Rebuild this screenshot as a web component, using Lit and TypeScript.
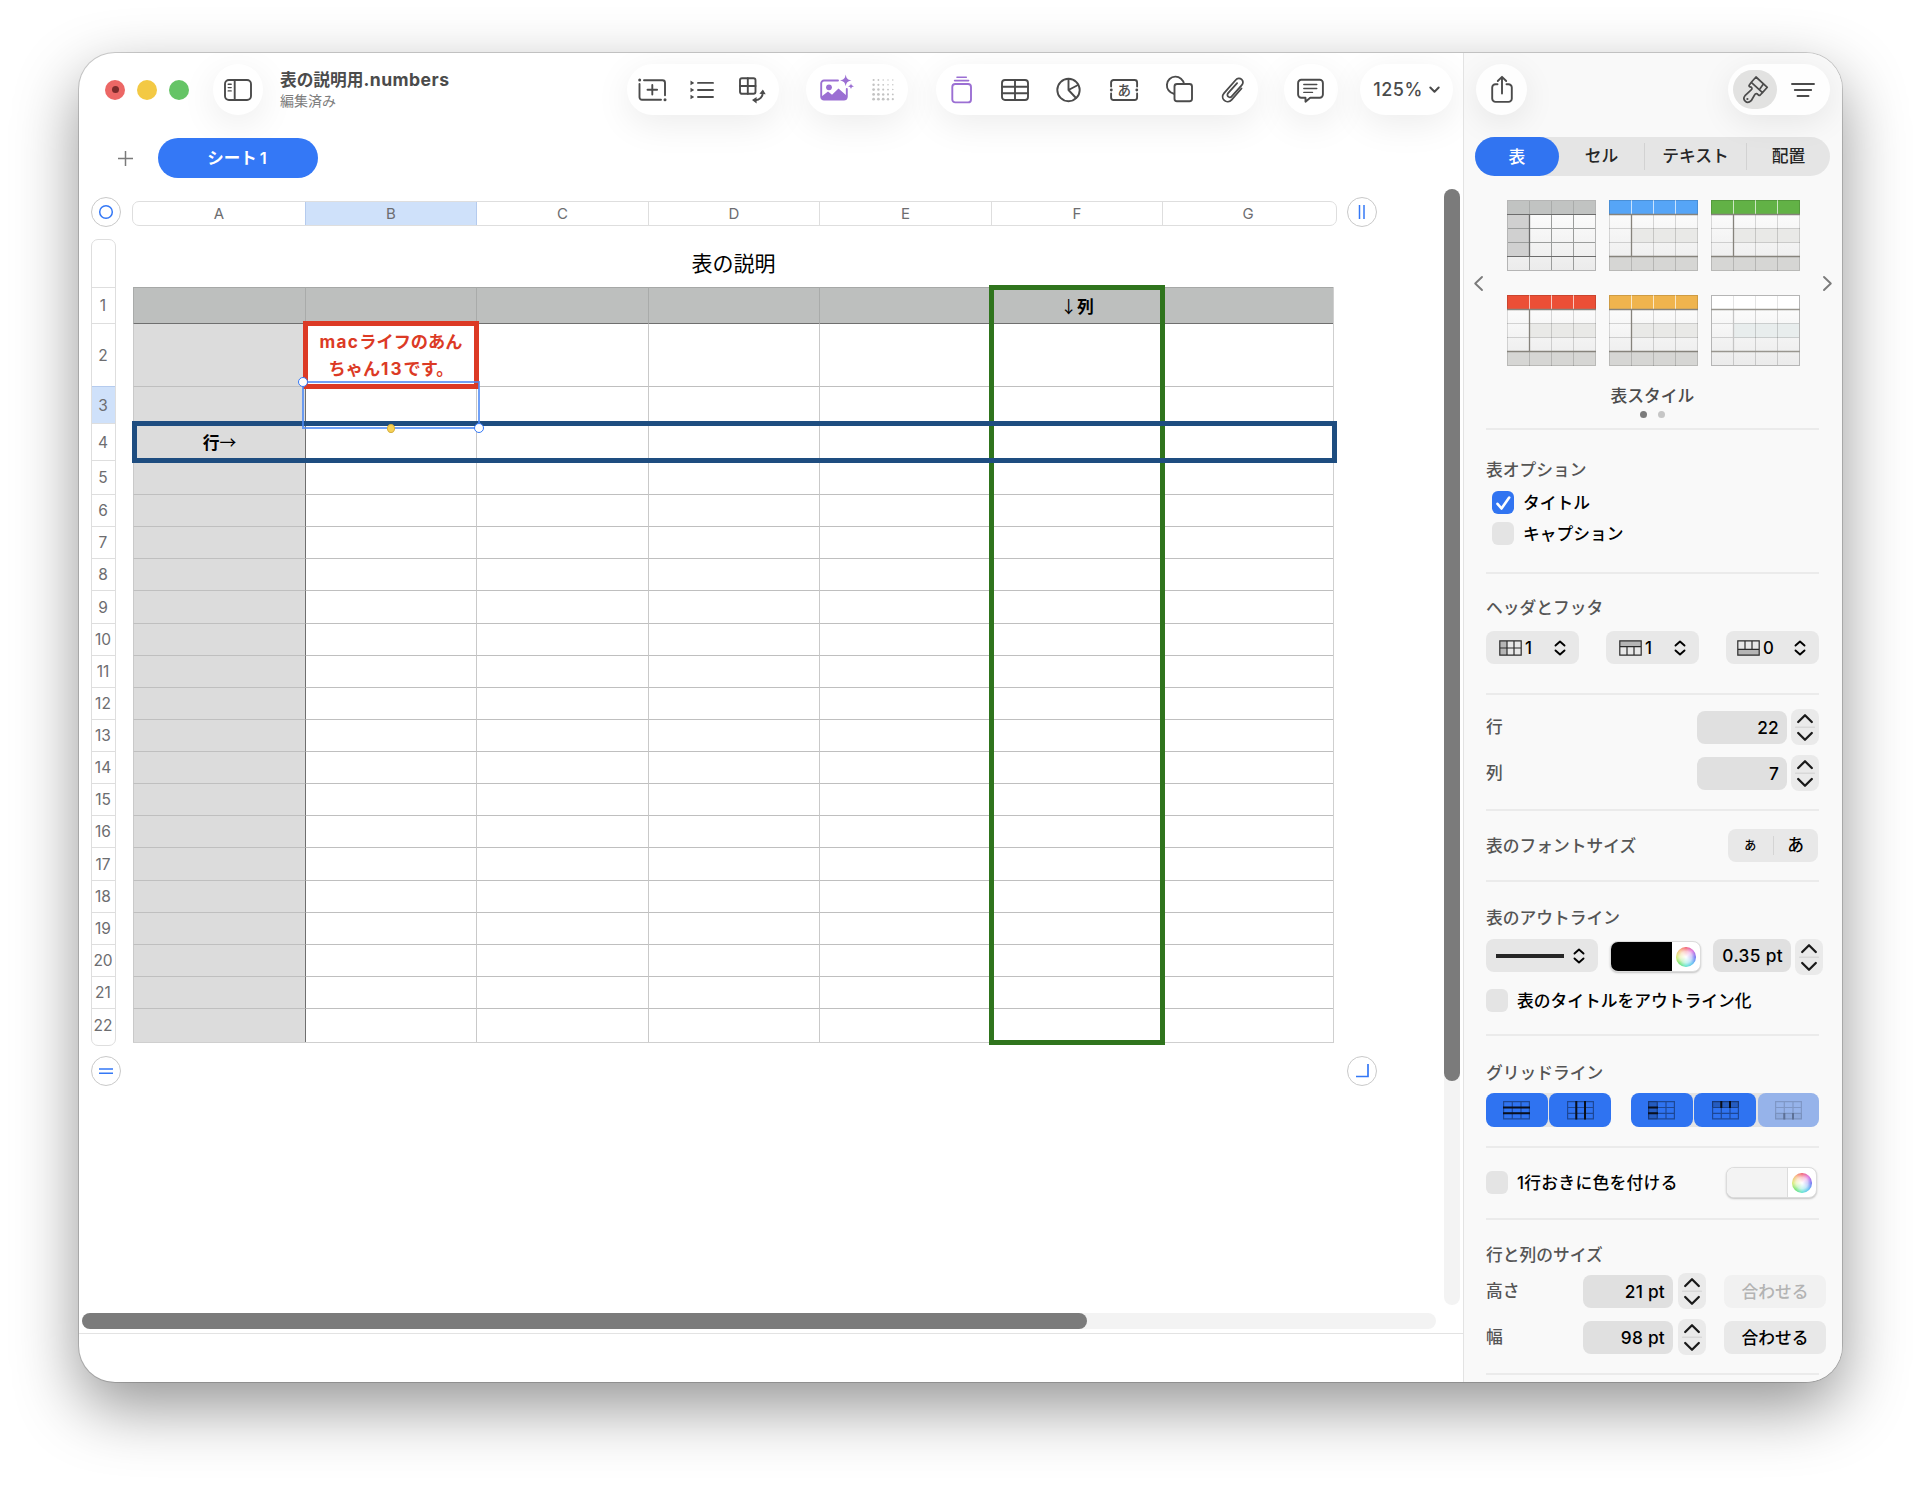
import { LitElement, html, svg, css, TemplateResult, SVGTemplateResult } from "lit";
import { customElement, property } from "lit/decorators.js";
import { classMap } from "lit/directives/class-map.js";
import { styleMap } from "lit/directives/style-map.js";

const COLUMNS = [
  { name: "A", width: 172 },
  { name: "B", width: 171 },
  { name: "C", width: 172 },
  { name: "D", width: 171 },
  { name: "E", width: 172 },
  { name: "F", width: 171 },
  { name: "G", width: 171 },
];

const ROW_HEIGHTS = [
  36, 63, 37, 37, 34, 32, 32, 32, 33, 32, 32, 32, 32, 32, 32, 32, 33, 32, 32, 32, 32, 34,
];

const CELL_TEXT: Record<string, TemplateResult> = {
  F1: html`<span class="arrow">↓</span><span>列</span>`,
  B2: html`<span class="note"><span class="latin">mac</span>ライフのあん<br />ちゃん<span class="digits">13</span>です。</span>`,
  A4: html`<span>行</span><span class="arrow">→</span>`,
};

/* ---------- toolbar glyphs: every drawing is 30 units tall ---------- */

const glyph = (width: number, body: SVGTemplateResult) => html`<svg
  class="glyph"
  width=${width}
  height="30"
  viewBox="0 0 ${width} 30"
  fill="none"
  stroke="currentColor"
  stroke-width="1.9"
  stroke-linecap="round"
  stroke-linejoin="round"
>
  ${body}
</svg>`;

const sidebarGlyph = glyph(
  28,
  svg`<rect x="1" y="5" width="26" height="20" rx="4"/><path d="M10.7 5v20"/><path stroke-width="1.4" d="M4.2 9.3h3M4.2 12.6h3M4.2 15.9h3"/>`
);
const insertGlyph = glyph(
  29,
  svg`<path d="M6 5.2h18.5a2.5 2.5 0 0 1 2.5 2.5v12.5M23 24.8H4a2.5 2.5 0 0 1-2.500-2.500V9"/><circle cx="1.700" cy="5" r="1.500" fill="currentColor" stroke="none"/><circle cx="27" cy="24.800" r="1.500" fill="currentColor" stroke="none"/><path d="M14.300 10v9.600M9.500 14.800h9.600"/>`
);
const listGlyph = glyph(
  26,
  svg`<path d="M8 7.900h15M8 15h15M8 22h15"/><g fill="currentColor" stroke="none"><path d="M.5 5.600v4.600l3.800-2.300zM.5 12.700v4.600l3.800-2.300zM.5 19.700v4.600l3.800-2.300z"/></g>`
);
const pivotGlyph = glyph(
  27,
  svg`<rect x="1" y="3.300" width="15.500" height="15.500" rx="2"/><path d="M8.800 3.300v15.500M1 11h15.500M23.700 17.500c.3 4-3 7.700-7.500 7.700"/><g fill="currentColor" stroke="none"><path d="M20.400 18.800l3.500-4.300 2.800 4.800zM17.600 22l-4.600 3 4.600 3.400z"/></g>`
);
const imageGlyph = glyph(
  35,
  svg`<path d="M18 5.500H4a2.800 2.800 0 0 0-2.800 2.800v13.500A2.800 2.800 0 0 0 4 24.600h20a2.800 2.800 0 0 0 2.800-2.800V14"/><circle cx="9" cy="12.300" r="2.900" fill="currentColor" stroke="none"/><path fill="currentColor" stroke="none" d="M1.500 21.500l6.500-5 4 3.200 6.500-6.200 8.500 7.500v1.500a2.500 2.500 0 0 1-2.500 2.500H4a2.500 2.500 0 0 1-2.500-2.500z"/><path fill="currentColor" stroke="none" d="M25.700-.5c.7 4 1.700 5 5.700 5.900-4 .9-5 1.900-5.700 5.900-.7-4-1.700-5-5.700-5.900 4-.9 5-1.900 5.700-5.900zM31 8.300c.4 2 .9 2.500 3 3-2.100.5-2.600 1-3 3-.4-2-.9-2.500-3-3 2.100-.5 2.600-1 3-3z"/>`
);
const dotsGlyph = glyph(
  23,
  svg`<g fill="#c3c3c3" stroke="none">${[0, 1, 2, 3, 4].map((r) =>
    [0, 1, 2, 3, 4].map(
      (c) =>
        svg`<circle cx=${1.6 + c * 4.8} cy=${5 + r * 4.8} r=${Math.min(1.4, Math.max(0.7, 1.4 - c * 0.16 + (r - 2) * 0.16))}/>`
    )
  )}</g>`
);
const stackGlyph = glyph(
  22,
  svg`<rect x="1.300" y="9" width="18.700" height="18.400" rx="3"/><path d="M3.600 5.600h14M6 2.200h9.300" stroke-width="1.600"/>`
);
const tableGlyph = glyph(
  28,
  svg`<rect x="1" y="5" width="26" height="20" rx="3"/><path d="M14 5v20M1 11.700h26M1 18.300h26"/>`
);
const pieGlyph = glyph(
  25,
  svg`<circle cx="12.500" cy="15" r="11.200"/><path d="M12.500 4v11l9.500-5M12.500 15l7.500 8"/>`
);
const textGlyph = glyph(
  29,
  svg`<g transform="translate(.8 0)"><path d="M1.300 11.500V7.500A2.500 2.500 0 0 1 3.800 5h21a2.500 2.500 0 0 1 2.500 2.500v4M1.300 18.500v4A2.500 2.500 0 0 0 3.800 25h21a2.500 2.500 0 0 0 2.500-2.500v-4"/><circle cx="1.500" cy="15" r="1.400" fill="currentColor" stroke="none"/><circle cx="27" cy="15" r="1.400" fill="currentColor" stroke="none"/><text x="14.400" y="20" text-anchor="middle" font-size="13.500" font-weight="500" fill="currentColor" stroke="none">あ</text></g>`
);
const shapesGlyph = glyph(
  28,
  svg`<g transform="translate(.8 0)"><path d="M8 18.700A8.600 8.600 0 1 1 18.200 9"/><rect x="8.700" y="9" width="17.500" height="17.300" rx="2.500"/></g>`
);
const clipGlyph = glyph(
  24,
  svg`<path stroke-width="1.800" d="M20.500 13.500L10.600 24.800c-2 2.200-5.200 2.500-7.300.6s-2.200-5-.2-7.300L14.700 5c1.700-1.900 4.200-2.100 5.900-.6s1.800 3.900.2 5.700L10.700 21.300c-1 1.200-2.500 1.300-3.500.4s-1.100-2.400-.1-3.500l9-10"/>`
);
const commentGlyph = glyph(
  27,
  svg`<path d="M4.300 4.800h18.400a3.200 3.200 0 0 1 3.200 3.200v11.500a3.200 3.200 0 0 1-3.200 3.200h-9.500l-4.700 4v-4H4.300a3.200 3.200 0 0 1-3.200-3.200V8a3.200 3.200 0 0 1 3.200-3.200z"/><path stroke-width="1.400" d="M6.800 9.500h13M6.800 13.500h13M6.800 17.400h8.700"/>`
);
const shareGlyph = glyph(
  22,
  svg`<path d="M6.500 9.300H4.500A3.300 3.300 0 0 0 1.200 12.600v11a3.300 3.300 0 0 0 3.300 3.300h13a3.300 3.300 0 0 0 3.300-3.300v-11a3.300 3.300 0 0 0-3.300-3.300h-2"/><path d="M11 18.500V2.300M6.800 6L11 1.800 15.200 6"/>`
);
const brushGlyph = glyph(
  27,
  svg`<path stroke-width="1.700" d="M14 2L25.300 12.300 20.500 17.600 9.300 7.300zM9.300 7.300L7.200 10.200c-.6.800.2 1.600 1 1.700 1.800.3 2.500 1.700 1 3L3 20.700c-3 3.500 1.500 9.500 6.200 5l3.500-6c.8-1.500 2.300-1.500 3.200-.2.600.9 1.500 1.200 2.300.5l2.300-2.400M21 9.500l-2.800 4"/><circle cx="5.400" cy="24" r="1.100" fill="currentColor" stroke="none"/>`
);
const linesGlyph = glyph(24, svg`<path d="M1 9h22M3.800 15h16.400M6.500 21h11"/>`);

const chevron = html`<svg width="11" height="8" viewBox="0 0 11 8" fill="none" stroke="currentColor" stroke-width="2" stroke-linecap="round" stroke-linejoin="round"><path d="M1.300 1.500L5.500 5.800 9.700 1.500" /></svg>`;
const upDown = html`<svg class="updown" width="12" height="16" viewBox="0 0 12 16" fill="none" stroke="currentColor" stroke-width="1.900" stroke-linecap="round" stroke-linejoin="round"><path d="M1.500 5.500L6 1.500l4.500 4M1.500 10.500L6 14.500l4.500-4" /></svg>`;
const stepper = html`<span class="stepper"
  ><svg width="28" height="36" viewBox="0 0 28 36" fill="none" stroke="#1a1a1a" stroke-width="2.300" stroke-linecap="round" stroke-linejoin="round"><path d="M7.200 13L14 6.300 20.800 13M7.200 24L14 30.700 20.800 24" /><path d="M4.500 18.200h19" stroke="#cfcfcf" stroke-width="1" /></svg
></span>`;
const wheel = html`<span class="wheel"></span>`;

/* Header / footer pickers: which strip of the small table is shaded. */
const bandIcon = (kind: "column" | "header" | "footer") => html`<svg width="23" height="16" viewBox="0 0 23 16" fill="none" stroke="#2b2b2b" stroke-width="1.200">
  ${kind === "column"
    ? svg`<path fill="#b5b5b5" stroke="none" d="M1 1h7v14H1z"/><path d="M.8.8h21.400v14.400H.8zM8 1v14M15 1v14M1 8h21"/>`
    : kind === "header"
      ? svg`<path fill="#b5b5b5" stroke="none" d="M1 1h21v5.500H1z"/><path d="M.8.8h21.400v14.400H.8zM1 6.600h21M8 6.600V15M15 6.600V15"/>`
      : svg`<path fill="#b5b5b5" stroke="none" d="M1 9.500h21V15H1z"/><path d="M.8.8h21.400v14.400H.8zM1 9.400h21M8 1v8.400M15 1v8.400"/>`}
</svg>`;

const GRID_STRESS: Record<string, SVGTemplateResult> = {
  rows: svg`<path d="M0 6.500h27M0 12.300h27"/>`,
  columns: svg`<path d="M9.300 0v18.500M18 0v18.500"/>`,
  headColumn: svg`<path fill="#0003" stroke="none" d="M0 0h9.500v18.500H0z"/><path d="M0 6.500h10M0 12.300h10"/>`,
  headRow: svg`<path fill="#0003" stroke="none" d="M0 0h27v6.500H0z"/><path d="M9.300 0v7M18 0v7"/>`,
  footRow: svg`<path fill="#0002" stroke="none" d="M0 12.300h27v6.200H0z"/><path d="M9.300 12v6.500M18 12v6.500"/>`,
};
const gridIcon = (kind: string) => html`<svg width="27" height="19" viewBox="0 0 27 19" fill="none">
  <path stroke="#00000060" stroke-width="1.200" d="M.6.6h25.800v17.300H.6zM1 6.500h25M1 12.300h25M9.300 1v17M18 1v17" />
  <g stroke="#0a0f1c" stroke-width="2">${GRID_STRESS[kind]}</g>
</svg>`;

const STYLES = [
  { id: "plain", head: "#c1c3c2" },
  { id: "blue", head: "#56a5f7" },
  { id: "green", head: "#62b246" },
  { id: "red", head: "#eb4f36" },
  { id: "amber", head: "#efb44e" },
  { id: "blank", head: "#ffffff" },
];

/* Miniature table used in the style gallery. */
@customElement("style-thumb")
class StyleThumb extends LitElement {
  @property() kind = "plain";
  @property() head = "#fff";

  static styles = css`
    :host {
      display: block;
      width: 89px;
      height: 71px;
    }
    svg {
      display: block;
    }
  `;

  render() {
    const plain = this.kind === "plain";
    const blank = this.kind === "blank";
    const line = plain ? "#9b9d9c" : "#00000026";
    const strong = plain ? "#6c6c6c" : blank ? "#99968f" : "#86837c";
    const split = plain ? "#a9abaa" : blank ? "#e4e4e4" : "#ffffffb0";
    return html`<svg width="89" height="71" viewBox="0 0 89 71">
      <defs>
        <linearGradient id="fade" x1="0" y1="0" x2="0" y2="1">
          <stop offset="0" stop-color="#fff" />
          <stop offset="1" stop-color="#ebebeb" />
        </linearGradient>
      </defs>
      <rect width="89" height="71" fill="url(#fade)" />
      <rect width="89" height="14.500" fill=${this.head} />
      ${plain
        ? svg`<rect y="14.500" width="22.500" height="42" fill="#d0d0d0"/>`
        : svg`<rect x="22.500" y="28.500" width="67" height="14" fill=${blank ? "#e8eded" : "#e9e9e7"}/>`}
      ${plain || blank ? "" : svg`<rect y="56.500" width="89" height="14.500" fill="#d6d6d4"/>`}
      <path stroke=${split} d="M22.500 0v14M44.500 0v14M66.500 0v14" />
      <path stroke=${line} fill="none" d="M0 28.500h89M0 42.500h89M44.500 15v56M66.500 15v56M22.500 57v14" />
      <rect x=".5" y=".5" width="88" height="70" fill="none" stroke=${blank || plain ? "#b5b5b5" : "#00000022"} />
      <path stroke=${blank ? "#c5c5c5" : strong} stroke-width="1.300" d="M22.500 14.500v42" />
      <path stroke=${strong} stroke-width=${plain ? 1.1 : 1.6} d="M0 14.500h89M0 56.500h89" />
    </svg>`;
  }
}

/* Spreadsheet canvas: headers, cells and the coloured frames over them. */
@customElement("sheet-canvas")
class SheetCanvas extends LitElement {
  static styles = css`
    :host {
      display: block;
      padding: 19px 0 0 12px;
      font-size: 15px;
      color: #6d6d70;
    }
    .line {
      display: flex;
      align-items: center;
    }
    .knob {
      width: 28px;
      height: 28px;
      border: 1px solid #c9c9c9;
      border-radius: 50%;
      display: flex;
      align-items: center;
      justify-content: center;
      background: #fff;
    }
    .knob svg {
      display: block;
    }
    .cols {
      display: flex;
      width: 1203px;
      height: 23px;
      margin: 2px 10px 0 11px;
      border: 1px solid #dedede;
      border-radius: 7px;
      overflow: hidden;
    }
    .col {
      box-sizing: border-box;
      display: flex;
      align-items: center;
      justify-content: center;
      border-left: 1px solid #dedede;
    }
    .col:first-child {
      border-left: 0;
    }
    .col.on {
      background: #cfe1fa;
      border-color: #b5cbee;
    }
    .col.after {
      border-color: #b5cbee;
    }
    .grid-area {
      display: flex;
      align-items: flex-start;
      margin-top: 12px;
      gap: 17px;
    }
    .rows {
      width: 23px;
      height: 805px;
      border: 1px solid #dedede;
      border-radius: 7px;
      overflow: hidden;
    }
    .row {
      box-sizing: border-box;
      display: flex;
      align-items: center;
      justify-content: center;
      border-top: 1px solid #dedede;
      padding-right: 1px;
      font-size: 15.5px;
    }
    .row.pad {
      height: 47px;
      border-top: 0;
    }
    .row.on {
      background: #cfe1fa;
      border-color: #b5cbee;
    }
    .table-box {
      width: 1201px;
    }
    .caption {
      height: 48px;
      line-height: 50px;
      text-align: center;
      font-size: 21px;
      color: #000;
      font-weight: 400;
    }
    .table {
      position: relative;
      display: grid;
      border-right: 1px solid #cfcfcf;
      border-bottom: 1px solid #cfcfcf;
    }
    .cell {
      box-sizing: border-box;
      display: flex;
      align-items: center;
      justify-content: center;
      border-top: 1px solid #bfbfbf;
      border-left: 1px solid #c9c9c9;
      color: #000;
      font-size: 16.800px;
      font-weight: 700;
    }
    .cell.side {
      background: #dcdcdc;
    }
    .cell.first {
      border-left-color: #6f6f6f;
    }
    .cell.head {
      background: #bdbfbe;
      border-top-color: #a6a8a7;
      border-left-color: #a9abaa;
    }
    .cell.under {
      border-top-color: #6f6f6f;
    }
    .arrow {
      font-family: "Noto Sans CJK JP", sans-serif;
      font-weight: 400;
      line-height: 24px;
    }
    .note {
      color: #dc3a25;
      text-align: center;
      line-height: 26.400px;
      font-size: 17.200px;
      padding-top: 1px;
    }
    .latin {
      letter-spacing: 1.300px;
    }
    .digits {
      letter-spacing: 2px;
      margin-left: 1px;
    }
    .frame {
      position: absolute;
      box-sizing: border-box;
      pointer-events: none;
    }
    .frame.green {
      left: 856px;
      top: -2px;
      width: 176px;
      height: 760px;
      border: 5px solid #2f741d;
    }
    .frame.red {
      left: 170px;
      top: 34px;
      width: 176px;
      height: 68px;
      border: 5px solid #dc3a25;
    }
    .frame.blue {
      left: -1px;
      top: 134px;
      width: 1205px;
      height: 42px;
      border: 5px solid #1e4d80;
    }
    .frame.pick {
      left: 169px;
      top: 94px;
      width: 178px;
      height: 48px;
      border: 2px solid #4d8af5cc;
    }
    .dot {
      position: absolute;
      box-sizing: border-box;
      width: 10px;
      height: 10px;
      border-radius: 50%;
      background: #fff;
      border: 1.500px solid #3478f6;
    }
    .dot.tl {
      left: -6px;
      top: -6px;
    }
    .dot.br {
      right: -6px;
      bottom: -6px;
    }
    .dot.mid {
      width: 8px;
      height: 9px;
      left: 83px;
      bottom: -6px;
      background: #f7d154;
      border: 1px solid #d3ad3c;
    }
    .line.foot {
      margin-top: 10px;
      gap: 1226px;
    }
  `;

  render() {
    const template = {
      gridTemplateColumns: COLUMNS.map((c) => `${c.width}px`).join(" "),
      gridTemplateRows: ROW_HEIGHTS.map((h) => `${h}px`).join(" "),
    };
    return html`
      <div class="line">
        <div class="knob">
          <svg width="16" height="16"><circle cx="8" cy="8" r="6.300" fill="none" stroke="#3478f6" stroke-width="1.500" /></svg>
        </div>
        <div class="cols">
          ${COLUMNS.map(
            (c, i) => html`<div
              class=${classMap({ col: true, on: i === 1, after: i === 2 })}
              style=${styleMap({ width: `${c.width}px` })}
            >
              ${c.name}
            </div>`
          )}
        </div>
        <div class="knob">
          <svg width="16" height="16"><path d="M5.500 1v14M10 1v14" stroke="#3478f6" stroke-width="1.500" /></svg>
        </div>
      </div>
      <div class="grid-area">
        <div class="rows">
          <div class="row pad"></div>
          ${ROW_HEIGHTS.map(
            (h, i) => html`<div
              class=${classMap({ row: true, on: i === 2 })}
              style=${styleMap({ height: `${h}px` })}
            >
              ${i + 1}
            </div>`
          )}
        </div>
        <div class="table-box">
          <div class="caption">表の説明</div>
          <div class="table" style=${styleMap(template)}>
            ${ROW_HEIGHTS.map((_, r) =>
              COLUMNS.map(
                (c, i) => html`<div
                  class=${classMap({
                    cell: true,
                    head: r === 0,
                    side: i === 0 && r > 0,
                    first: i === 1 && r > 0,
                    under: r === 1,
                  })}
                >
                  ${CELL_TEXT[`${c.name}${r + 1}`] ?? ""}
                </div>`
              )
            )}
            <div class="frame green"></div>
            <div class="frame red"></div>
            <div class="frame blue"></div>
            <div class="frame pick">
              <i class="dot tl"></i><i class="dot mid"></i><i class="dot br"></i>
            </div>
          </div>
        </div>
      </div>
      <div class="line foot">
        <div class="knob">
          <svg width="16" height="16"><path d="M1 6h14M1 10.300h14" stroke="#3478f6" stroke-width="1.600" /></svg>
        </div>
        <div class="knob">
          <svg width="16" height="16"><path d="M2 13.500h12V1" fill="none" stroke="#3478f6" stroke-width="1.700" /></svg>
        </div>
      </div>
    `;
  }
}

/* Format inspector on the right. */
@customElement("format-panel")
class FormatPanel extends LitElement {
  static styles = css`
    :host {
      box-sizing: border-box;
      display: block;
      width: 379px;
      background: #f9f9f9;
      border-left: 1px solid #e3e3e3;
      font-size: 16.750px;
      font-weight: 500;
      color: #000;
      overflow: hidden;
    }
    svg {
      display: block;
      flex: none;
      overflow: visible;
    }
    .bar {
      display: flex;
      align-items: center;
      justify-content: space-between;
      height: 73px;
      padding: 0 12px 0 12px;
      color: #4b4b4b;
    }
    .pill {
      display: flex;
      align-items: center;
      justify-content: center;
      height: 51px;
      border-radius: 26px;
      background: #fefefe;
      box-shadow: 0 8px 32px rgba(0, 0, 0, 0.08);
    }
    .pill.round {
      width: 51px;
    }
    .pill.duo {
      box-sizing: border-box;
      width: 102px;
      justify-content: space-between;
      padding: 0 15px 0 5px;
    }
    .active {
      display: flex;
      align-items: center;
      justify-content: center;
      width: 44px;
      height: 39px;
      border-radius: 20px;
      background: #e2e2e1;
    }
    .tabs {
      display: grid;
      grid-template-columns: 84px 86px 102px 83px;
      align-items: center;
      height: 39px;
      margin: 11px 12px 0 11px;
      border-radius: 20px;
      background: #e5e5e5;
      color: #262626;
    }
    .tab {
      text-align: center;
      line-height: 27px;
    }
    .tab.on {
      height: 39px;
      line-height: 40px;
      border-radius: 20px;
      background: #3174f1;
      color: #fff;
    }
    .tab.rule {
      border-right: 1px solid #d2d2d2;
    }
    .gallery {
      display: flex;
      align-items: center;
      justify-content: space-between;
      margin: 24px 10px 0 10px;
      color: #7b7b7b;
    }
    .thumbs {
      display: grid;
      grid-template-columns: repeat(3, 89px);
      gap: 24px 13px;
    }
    .name {
      margin-top: 18px;
      line-height: 24px;
      text-align: center;
      color: #4c4c4c;
      padding-right: 1px;
    }
    .pager {
      display: flex;
      justify-content: center;
      gap: 11px;
      margin: 3px 1px 10px 0;
    }
    .pager i {
      width: 7px;
      height: 7px;
      border-radius: 50%;
      background: #c6c6c6;
    }
    .pager i.on {
      background: #7b7b7b;
    }
    .section {
      box-sizing: border-box;
      margin: 0 23px 0 22px;
      border-top: 2px solid #ebebeb;
    }
    .title,
    .label {
      color: #555;
      line-height: 24px;
    }
    .row {
      display: flex;
      align-items: center;
    }
    .row.between {
      justify-content: space-between;
    }
    .check {
      display: flex;
      align-items: center;
      gap: 9px;
      line-height: 24px;
    }
    .box {
      display: flex;
      align-items: center;
      justify-content: center;
      width: 22px;
      height: 23px;
      border-radius: 6px;
      background: #e4e4e4;
    }
    .box.on {
      background: #3174f1;
    }
    .ctl {
      box-sizing: border-box;
      display: flex;
      align-items: center;
      height: 33px;
      border-radius: 8px;
      background: #e8e8e8;
    }
    .field {
      justify-content: flex-end;
      width: 90px;
      padding-right: 8px;
      background: #e0e0e0;
      font-size: 17.300px;
      letter-spacing: 0.250px;
    }
    .stepper {
      width: 28px;
      height: 36px;
      border-radius: 8px;
      background: #eaeaea;
    }
    .spacer {
      flex: 1;
    }
    .options {
      height: 144px;
      padding-top: 28px;
    }
    .options .check {
      margin: 8px 0 0 6px;
      height: 23px;
    }
    .options .title + .check {
      margin-top: 9px;
    }
    .headers {
      height: 121px;
      padding-top: 22px;
    }
    .headers .row {
      margin-top: 11px;
    }
    .headers .ctl {
      width: 93px;
      padding: 0 13px;
      gap: 3px;
      justify-content: flex-start;
    }
    .headers .ctl.tight {
      padding-left: 11px;
    }
    .headers .updown {
      margin-left: auto;
    }
    .counts {
      height: 116px;
      padding-top: 14px;
    }
    .counts .row {
      height: 36px;
      margin-bottom: 10px;
      gap: 4px;
    }
    .fontsize {
      height: 71px;
      padding-top: 18px;
    }
    .sizes {
      width: 90px;
      margin-right: 1px;
    }
    .sizes span {
      flex: 1;
      text-align: center;
      line-height: 19px;
    }
    .sizes .small {
      font-size: 12px;
      border-right: 1px solid #d4d4d4;
    }
    .outline {
      height: 154px;
      padding-top: 24px;
    }
    .outline .row {
      width: 339px;
      height: 36px;
      margin-top: 9px;
      align-items: flex-start;
    }
    .outline .stroke {
      width: 112px;
      padding: 0 13px 0 10px;
      justify-content: space-between;
      background: #e6e6e6;
    }
    .stroke-line {
      width: 68px;
      height: 4px;
      background: #262626;
    }
    .well {
      box-sizing: border-box;
      display: flex;
      width: 91px;
      height: 31px;
      border: 1px solid #dcdcdc;
      border-radius: 8px;
      overflow: hidden;
      background: #fff;
      box-shadow: 0 1px 2px rgba(0, 0, 0, 0.22);
    }
    .well .fill {
      flex: 1;
      background: #f3f3f3;
      border-right: 1px solid #dcdcdc;
    }
    .well.dark .fill {
      background: #000;
      border-color: #000;
      margin: -1px 0 -1px -1px;
    }
    .well .tray {
      display: flex;
      align-items: center;
      justify-content: center;
      width: 28px;
    }
    .wheel {
      width: 20px;
      height: 20px;
      border-radius: 50%;
      background: radial-gradient(circle, #fff 0, #ffffffb0 40%, #fff0 75%),
        conic-gradient(#f0465a, #d858d8, #5a5cf0, #46b4f0, #48e0c8, #5ee05a, #d4e860, #f7b26a, #f0465a);
    }
    .outline .well {
      margin: 2px 12px 0 12px;
    }
    .outline .pt {
      width: 78px;
      padding-right: 8px;
      margin-right: 4px;
      letter-spacing: 0.350px;
    }
    .outline .check {
      margin-top: 14px;
      height: 23px;
    }
    .gridlines {
      height: 112px;
      padding-top: 25px;
    }
    .gridlines .row {
      margin-top: 8px;
      gap: 20px;
    }
    .set {
      display: flex;
      gap: 1.500px;
      background: #e4e4e4;
      border-radius: 9px;
    }
    .key {
      display: flex;
      align-items: center;
      justify-content: center;
      width: 61.800px;
      height: 34px;
      border-radius: 8px;
      background: #2f73f1;
    }
    .key.dim {
      background: #96b3ea;
    }
    .key.dim svg {
      opacity: 0.4;
    }
    .banding {
      height: 72px;
      padding-top: 19px;
    }
    .banding .row {
      height: 31px;
      padding-right: 2px;
    }
    .banding .check {
      letter-spacing: 0.300px;
    }
    .dims {
      height: 155px;
      padding-top: 23px;
    }
    .dims .row {
      width: 340px;
      height: 36px;
      margin-top: 6px;
    }
    .dims .row + .row {
      margin-top: 10px;
    }
    .dims .stepper {
      margin: 0 18px 0 5px;
    }
    .dims .fit {
      width: 102px;
      justify-content: center;
    }
    .dims .fit.off {
      background: #f1f1f1;
      color: #b3b3b3;
    }
    .last {
      height: 9px;
    }
  `;

  render() {
    const arrow = (d: string) => html`<svg width="9" height="15" viewBox="0 0 9 15" fill="none" stroke="currentColor" stroke-width="1.900" stroke-linecap="round" stroke-linejoin="round"><path d=${d} /></svg>`;
    return html`
      <div class="bar">
        <div class="pill round">${shareGlyph}</div>
        <div class="pill duo"><span class="active">${brushGlyph}</span>${linesGlyph}</div>
      </div>
      <div class="tabs">
        <span class="tab on">表</span><span class="tab rule">セル</span
        ><span class="tab rule">テキスト</span><span class="tab">配置</span>
      </div>
      <div class="gallery">
        ${arrow("M8 1L1.200 7.500 8 14")}
        <div class="thumbs">
          ${STYLES.map((s) => html`<style-thumb .kind=${s.id} .head=${s.head}></style-thumb>`)}
        </div>
        ${arrow("M1 1l6.800 6.500L1 14")}
      </div>
      <div class="name">表スタイル</div>
      <div class="pager"><i class="on"></i><i></i></div>

      <div class="section options">
        <div class="title">表オプション</div>
        <div class="check">
          <span class="box on"
            ><svg width="15" height="14" viewBox="0 0 15 14" fill="none" stroke="#fff" stroke-width="2.600" stroke-linecap="round" stroke-linejoin="round"><path d="M1.500 7.800l4 4.700L13.200 1.500" /></svg></span
          >タイトル
        </div>
        <div class="check"><span class="box"></span>キャプション</div>
      </div>

      <div class="section headers">
        <div class="title">ヘッダとフッタ</div>
        <div class="row between">
          <span class="ctl">${bandIcon("column")}1${upDown}</span>
          <span class="ctl">${bandIcon("header")}1${upDown}</span>
          <span class="ctl tight">${bandIcon("footer")}0${upDown}</span>
        </div>
      </div>

      <div class="section counts">
        <div class="row">
          <span class="label">行</span><span class="spacer"></span><span class="ctl field">22</span>${stepper}
        </div>
        <div class="row">
          <span class="label">列</span><span class="spacer"></span><span class="ctl field">7</span>${stepper}
        </div>
      </div>

      <div class="section fontsize">
        <div class="row between">
          <span class="label">表のフォントサイズ</span>
          <span class="ctl sizes"><span class="small">あ</span><span>あ</span></span>
        </div>
      </div>

      <div class="section outline">
        <div class="title">表のアウトライン</div>
        <div class="row">
          <span class="ctl stroke"><i class="stroke-line"></i>${upDown}</span>
          <span class="well dark"><i class="fill"></i><span class="tray">${wheel}</span></span>
          <span class="ctl field pt">0.35 pt</span>${stepper}
        </div>
        <div class="check"><span class="box"></span>表のタイトルをアウトライン化</div>
      </div>

      <div class="section gridlines">
        <div class="title">グリッドライン</div>
        <div class="row">
          <div class="set">
            <span class="key">${gridIcon("rows")}</span><span class="key">${gridIcon("columns")}</span>
          </div>
          <div class="set">
            <span class="key">${gridIcon("headColumn")}</span><span class="key">${gridIcon("headRow")}</span
            ><span class="key dim">${gridIcon("footRow")}</span>
          </div>
        </div>
      </div>

      <div class="section banding">
        <div class="row between">
          <div class="check"><span class="box"></span>1行おきに色を付ける</div>
          <span class="well"><i class="fill"></i><span class="tray">${wheel}</span></span>
        </div>
      </div>

      <div class="section dims">
        <div class="title">行と列のサイズ</div>
        <div class="row">
          <span class="label">高さ</span><span class="spacer"></span><span class="ctl field">21 pt</span>${stepper}<span
            class="ctl fit off"
            >合わせる</span
          >
        </div>
        <div class="row">
          <span class="label">幅</span><span class="spacer"></span><span class="ctl field">98 pt</span>${stepper}<span
            class="ctl fit"
            >合わせる</span
          >
        </div>
      </div>
      <div class="section last"></div>
    `;
  }
}

@customElement("app-root")
class AppRoot extends LitElement {
  static styles = css`
    :host {
      box-sizing: border-box;
      display: block;
      height: 1485px;
      padding: 53px 78px 0 79px;
      overflow: hidden;
      background: #fff;
      font-family: Inter, "Noto Sans CJK JP", sans-serif;
    }
    .window {
      display: flex;
      height: 1329px;
      border-radius: 36px;
      overflow: hidden;
      background: #fff;
      box-shadow: 0 0 0 1px rgba(0, 0, 0, 0.17), 0 25px 64px rgba(0, 0, 0, 0.42);
    }
    .main {
      display: flex;
      flex-direction: column;
      width: 1384px;
    }
    svg {
      display: block;
      flex: none;
      overflow: visible;
    }
    .toolbar {
      display: flex;
      align-items: center;
      height: 73px;
      padding: 0 10px 0 26px;
      color: #4b4b4b;
    }
    .lights {
      display: flex;
      gap: 12px;
      margin-right: 24px;
    }
    .light {
      display: flex;
      align-items: center;
      justify-content: center;
      width: 20px;
      height: 20px;
      border-radius: 50%;
    }
    .light.close {
      background: #ec6765;
    }
    .light.close i {
      width: 7px;
      height: 7px;
      border-radius: 50%;
      background: #7c2b2b;
    }
    .light.mini {
      background: #f3c944;
    }
    .light.zoom {
      background: #65c466;
    }
    .pill {
      display: flex;
      align-items: center;
      box-sizing: border-box;
      height: 51px;
      border-radius: 26px;
      background: #fff;
      box-shadow: 0 9px 36px rgba(0, 0, 0, 0.08);
    }
    .pill.side {
      width: 50px;
      justify-content: center;
    }
    .doc {
      margin-left: 17px;
      padding-top: 1px;
    }
    .doc-name {
      font-size: 16.700px;
      font-weight: 700;
      line-height: 21px;
      white-space: nowrap;
    }
    .ext {
      font-size: 17.600px;
      letter-spacing: 0.450px;
    }
    .doc-state {
      font-size: 14px;
      line-height: 20px;
      color: #7d7d7d;
    }
    .spacer {
      flex: 1;
    }
    .pill.edit {
      width: 152px;
      padding: 0 13px 0 11px;
      justify-content: space-between;
    }
    .pill.media {
      width: 102px;
      margin-left: 27px;
      padding: 0 13px 0 14px;
      justify-content: space-between;
    }
    .pill.media,
    .violet {
      color: #9b6fd3;
    }
    .pill.insert {
      width: 322px;
      margin-left: 28px;
      padding: 0 13px 0 15px;
      justify-content: space-between;
    }
    .pill.comment {
      width: 54px;
      margin-left: 26px;
      padding-right: 1px;
      justify-content: center;
    }
    .pill.scale {
      width: 93px;
      margin-left: 22px;
      justify-content: center;
      gap: 6px;
      font-size: 18px;
      font-weight: 500;
      letter-spacing: 0.500px;
    }
    .sheets {
      display: flex;
      align-items: center;
      height: 40px;
      margin-top: 12px;
      padding-left: 39px;
      gap: 25px;
      color: #7a7a7a;
    }
    .sheet {
      box-sizing: border-box;
      width: 160px;
      height: 40px;
      padding-right: 2px;
      border-radius: 20px;
      background: #3478f6;
      color: #fff;
      font-size: 16.500px;
      font-weight: 600;
      line-height: 40px;
      text-align: center;
      word-spacing: -1px;
    }
    .work {
      display: flex;
      height: 1131px;
    }
    .work sheet-canvas {
      flex: 1;
    }
    .vtrack {
      width: 16px;
      height: 1116px;
      margin: 11px 3px 0 0;
      border-radius: 8px;
      background: #f3f3f3;
    }
    .vthumb {
      height: 892px;
      border-radius: 8px;
      background: #7b7b7b;
    }
    .htrack {
      width: 1354px;
      height: 16px;
      margin: 4px 0 4px 3px;
      border-radius: 8px;
      background: #f3f3f3;
    }
    .hthumb {
      width: 1005px;
      height: 16px;
      border-radius: 8px;
      background: #7b7b7b;
    }
    .footer {
      flex: 1;
      border-top: 1px solid #e3e3e3;
    }
  `;

  render() {
    return html`
      <div class="window">
        <div class="main">
          <div class="toolbar">
            <div class="lights">
              <span class="light close"><i></i></span>
              <span class="light mini"></span>
              <span class="light zoom"></span>
            </div>
            <div class="pill side">${sidebarGlyph}</div>
            <div class="doc">
              <div class="doc-name">表の説明用<span class="ext">.numbers</span></div>
              <div class="doc-state">編集済み</div>
            </div>
            <span class="spacer"></span>
            <div class="pill edit">${insertGlyph}${listGlyph}${pivotGlyph}</div>
            <div class="pill media">${imageGlyph}${dotsGlyph}</div>
            <div class="pill insert">
              <span class="violet">${stackGlyph}</span>${tableGlyph}${pieGlyph}${textGlyph}${shapesGlyph}${clipGlyph}
            </div>
            <div class="pill comment">${commentGlyph}</div>
            <div class="pill scale"><span>125%</span>${chevron}</div>
          </div>
          <div class="sheets">
            <svg width="15" height="15"><path d="M7.500 0v15M0 7.500h15" stroke="currentColor" stroke-width="1.500" /></svg>
            <div class="sheet">シート 1</div>
          </div>
          <div class="work">
            <sheet-canvas></sheet-canvas>
            <div class="vtrack"><div class="vthumb"></div></div>
          </div>
          <div class="htrack"><div class="hthumb"></div></div>
          <div class="footer"></div>
        </div>
        <format-panel></format-panel>
      </div>
    `;
  }
}
